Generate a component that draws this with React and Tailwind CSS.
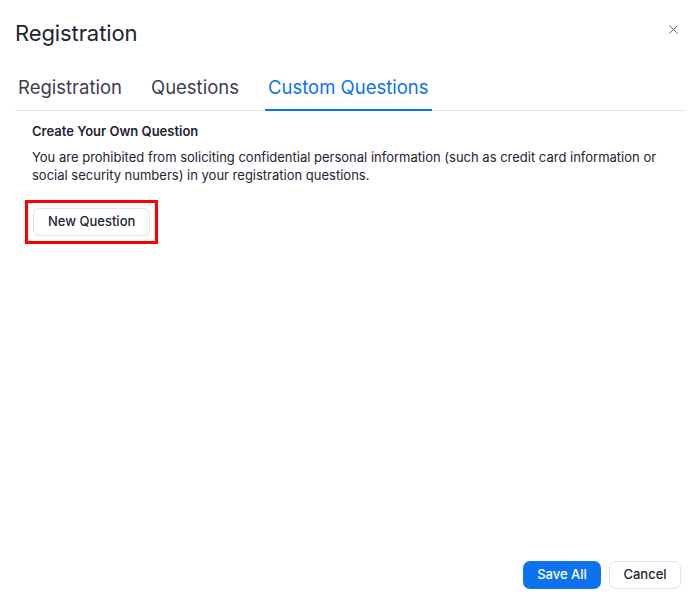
import React, { useState } from 'react'
import { X } from 'lucide-react'

const tabs = ['Registration', 'Questions', 'Custom Questions']

const App = () => {
  const [active, setActive] = useState(2)

  return (
    <div
      className="w-[700px] h-[605px] bg-white flex flex-col text-[#232333]"
      style={{ fontFamily: 'Inter, "Noto Sans", sans-serif' }}
    >
      {/* Header */}
      <div className="flex items-start justify-between pl-[15px] pr-[19px] pt-[19px]">
        <h1 className="text-[22px] leading-[28px] font-normal tracking-[-0.1px]">Registration</h1>
        <button className="mt-[3px] text-[#5f6670]" aria-label="Close">
          <X className="w-[15px] h-[15px]" strokeWidth={1.6} />
        </button>
      </div>

      {/* Tabs */}
      <div className="mx-[15px] mt-[27px] flex gap-[23px] border-b border-[#dfe3e8]">
        {tabs.map((tab, i) => (
          <button
            key={tab}
            onClick={() => setActive(i)}
            className={`px-[3px] pb-[9px] -mb-px text-[18.5px] leading-[26px] border-b-2 ${
              i === active
                ? 'text-[#0e72ed] border-[#0e72ed]'
                : 'text-[#3d3d4d] border-transparent'
            }`}
          >
            {tab}
          </button>
        ))}
      </div>

      {/* Content */}
      <div className="px-[32px] pt-[11px]">
        <h2 className="text-[13px] leading-[18px] font-semibold">Create Your Own Question</h2>
        <p className="mt-[8px] text-[13px] leading-[18px] text-[#232333]">
          You are prohibited from soliciting confidential personal information (such as credit card information or
          social security numbers) in your registration questions.
        </p>
        <div className="mt-[16px] -ml-[7px] inline-block border-[3px] border-[#ff0000] p-[5px]">
          <button className="h-[28px] px-[14px] rounded-[6px] border border-[#dfe3e8] bg-white text-[13px] font-medium">
            New Question
          </button>
        </div>
      </div>

      {/* Footer */}
      <div className="mt-auto flex justify-end gap-[8px] pr-[19px] pb-[16px]">
        <button className="h-[28px] w-[78px] rounded-[7px] bg-[#0e72ed] text-white text-[13px] font-medium">
          Save All
        </button>
        <button className="h-[28px] w-[72px] rounded-[7px] border border-[#dfe3e8] bg-white text-[13px] font-medium">
          Cancel
        </button>
      </div>
    </div>
  )
}

export default App
